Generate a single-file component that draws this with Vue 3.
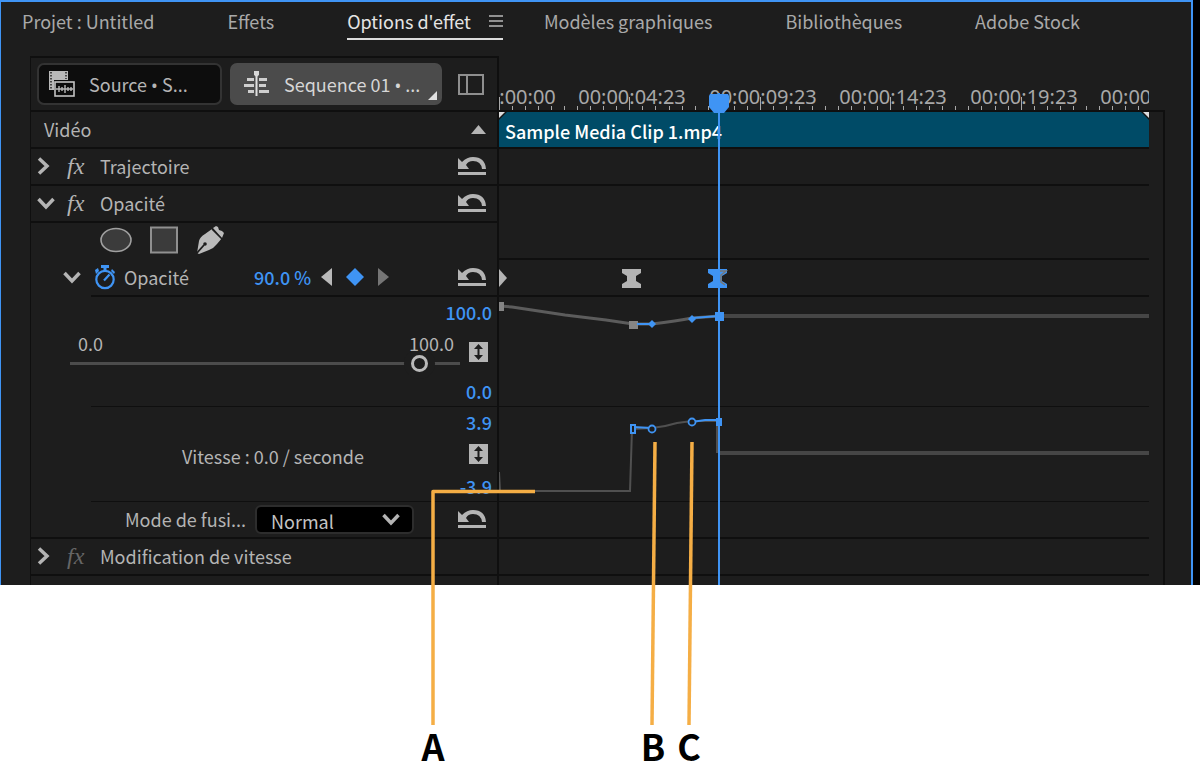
<template>
  <figure class="page">
    <div class="frame">
      <section class="panel">
        <nav class="tabs">
          <a v-for="tab in tabs" :key="tab" href="#" class="tab" :class="{ active: tab === activeTab }" @click.prevent="activeTab = tab">
            <span>{{ tab }}</span>
            <svg v-if="tab === activeTab" class="burger" width="14" height="12" viewBox="0 0 14 12">
              <path d="M0 1H14M0 6H14M0 11H14" stroke="#b8b8b8" stroke-width="1.4" />
            </svg>
          </a>
        </nav>

        <div class="body">
          <div class="props">
            <div class="head">
              <button class="source">
                <svg width="26" height="26" viewBox="0 0 26 26">
                  <path d="M0 0H19V9H5V19H0Z" fill="#b9b9b9" />
                  <path d="M2 1V18M17 1V8" stroke="#222" stroke-width="1.5" stroke-dasharray="1.5 1.5" />
                  <rect x="6" y="11" width="19" height="14" fill="#0d0d0d" stroke="#c4c4c4" stroke-width="1.6" />
                  <path d="M7 18H24M10 15V21M13 16V20M16 14V22M19 16V20M22 16V20" stroke="#b9b9b9" stroke-width="1.4" />
                </svg>
                <span>Source <span class="dot">•</span> S...</span>
              </button>
              <button class="sequence">
                <svg width="26" height="26" viewBox="0 0 26 26">
                  <path d="M3 8.500H10M15 8.500H23M0 14.500H10M15 14.500H22M4 20.500H10M15 20.500H25" stroke="#cfcfcf" stroke-width="3" />
                  <path d="M12.500 3V25" stroke="#e0e0e0" stroke-width="2" />
                  <path d="M10 0H15V4L12.500 6L10 4Z" fill="#d8d8d8" />
                </svg>
                <span>Sequence 01 <span class="dot">•</span> ...</span>
                <svg class="corner" width="9" height="9" viewBox="0 0 9 9"><path d="M9 0V9H0Z" fill="#e0e0e0" /></svg>
              </button>
              <button class="plain" aria-label="Timeline">
                <svg width="26" height="21" viewBox="0 0 26 21">
                  <path d="M1 1H25V20H1ZM9 1V20" fill="none" stroke="#8f8f8f" stroke-width="2" />
                </svg>
              </button>
            </div>

            <div class="row">
              <span class="section">Vidéo</span>
              <svg class="end" width="15" height="9" viewBox="0 0 15 9"><path d="M7.500 0L15 9H0Z" fill="#b4b4b4" /></svg>
            </div>

            <div class="row">
              <button class="plain toggle" aria-label="Trajectoire">
                <svg width="13" height="18" viewBox="0 0 13 18"><path d="M2 1.500L10 9L2 16.500" class="chev" /></svg>
              </button>
              <span class="fx">fx</span>
              <span>Trajectoire</span>
              <button class="plain end" aria-label="Reset"><svg width="28" height="20" viewBox="0 0 28 20"><path :d="resetPath" fill="#b4b4b4" /></svg></button>
            </div>

            <div class="row">
              <button class="plain toggle" aria-label="Opacité">
                <svg width="18" height="13" viewBox="0 0 18 13"><path d="M1.500 2L9 10L16.500 2" class="chev" /></svg>
              </button>
              <span class="fx">fx</span>
              <span>Opacité</span>
              <button class="plain end" aria-label="Reset"><svg width="28" height="20" viewBox="0 0 28 20"><path :d="resetPath" fill="#b4b4b4" /></svg></button>
            </div>

            <div class="row masks">
              <button class="plain" aria-label="Ellipse">
                <svg width="32" height="26" viewBox="0 0 32 26"><ellipse cx="16" cy="13" rx="15" ry="11.500" fill="#3b3b3b" stroke="#a0a0a0" stroke-width="1.6" /></svg>
              </button>
              <button class="plain" aria-label="Rectangle">
                <svg width="28" height="28" viewBox="0 0 28 28"><rect x="1" y="1.500" width="26" height="25" fill="#3b3b3b" stroke="#909090" stroke-width="2" /></svg>
              </button>
              <button class="plain" aria-label="Plume">
                <svg width="29" height="28" viewBox="0 0 29 28">
                  <path d="M1 27L3 15Q4 11 9 8L16 3L26 12L21 18Q18 22 13 24L3 28Z" fill="#bababa" />
                  <path d="M17 2L20 0L22 1L23 4L26 5L28 7L26 12Z" fill="#bababa" />
                  <path d="M0 28L8 19" stroke="#1d1d1d" stroke-width="1.8" />
                  <circle cx="9" cy="18" r="1.800" fill="#1d1d1d" />
                  <path d="M16 3L26 13" stroke="#1d1d1d" stroke-width="1.5" />
                </svg>
              </button>
            </div>

            <div class="row param">
              <button class="plain" aria-label="Opacité">
                <svg width="18" height="13" viewBox="0 0 18 13"><path d="M1.500 2L9 10L16.500 2" class="chev" /></svg>
              </button>
              <button class="plain watch" aria-label="Animation">
                <svg width="22" height="25" viewBox="0 0 22 25">
                  <circle cx="11" cy="14.500" r="8.700" fill="none" stroke="#3f94f4" stroke-width="2.200" />
                  <path d="M7 0H15V3H12.500V6H9.500V3H7ZM1 5L4 3L5 6L2 9ZM18 4L21 7L20 9L17 6Z" fill="#3f94f4" />
                  <path d="M15.500 9.500L10 15.500" stroke="#3f94f4" stroke-width="2.200" />
                </svg>
              </button>
              <span class="pname">Opacité</span>
              <span class="blue value">90.0 %</span>
              <div class="keys">
                <button class="plain" aria-label="Précédent"><svg width="11" height="18" viewBox="0 0 11 18"><path d="M11 0V18L0 9Z" fill="#b9b9b9" /></svg></button>
                <button class="plain" aria-label="Image clé"><svg width="18" height="18" viewBox="0 0 18 18"><path d="M9 0L18 9L9 18L0 9Z" fill="#3f94f4" /></svg></button>
                <button class="plain" aria-label="Suivant"><svg width="11" height="18" viewBox="0 0 11 18"><path d="M0 0V18L11 9Z" fill="#757575" /></svg></button>
              </div>
              <button class="plain end" aria-label="Reset"><svg width="28" height="20" viewBox="0 0 28 20"><path :d="resetPath" fill="#b4b4b4" /></svg></button>
            </div>

            <div class="row graph">
              <div class="slider">
                <label for="opacity"><span>0.0</span><span>100.0</span></label>
                <input id="opacity" v-model="opacity" type="range" min="0" max="100" step="0.5" />
              </div>
              <div class="scale">
                <span class="blue">100.0</span>
                <button class="plain fit" aria-label="Zoom"><svg width="19" height="20" viewBox="0 0 19 20"><path :d="fitBox" fill="#b4b4b4" /><path :d="fitArrow" fill="#1d1d1d" /></svg></button>
                <span class="blue">0.0</span>
              </div>
            </div>

            <div class="row velocity">
              <span class="speed">Vitesse : 0.0 / seconde</span>
              <div class="scale">
                <span class="blue">3.9</span>
                <button class="plain fit" aria-label="Zoom"><svg width="19" height="20" viewBox="0 0 19 20"><path :d="fitBox" fill="#b4b4b4" /><path :d="fitArrow" fill="#1d1d1d" /></svg></button>
                <span class="blue">-3.9</span>
              </div>
            </div>

            <div class="row mode">
              <label for="blend">Mode de fusi...</label>
              <div class="select">
                <select id="blend" v-model="blend">
                  <option>Normal</option>
                </select>
                <svg class="arrow" width="18" height="13" viewBox="0 0 18 13"><path d="M1.500 2L9 10L16.500 2" class="chev" /></svg>
              </div>
              <button class="plain end" aria-label="Reset"><svg width="28" height="20" viewBox="0 0 28 20"><path :d="resetPath" fill="#b4b4b4" /></svg></button>
            </div>

            <div class="row">
              <button class="plain toggle" aria-label="Modification de vitesse">
                <svg width="13" height="18" viewBox="0 0 13 18"><path d="M2 1.500L10 9L2 16.500" class="chev" /></svg>
              </button>
              <span class="fx dim">fx</span>
              <span>Modification de vitesse</span>
            </div>
          </div>

          <div class="timeline">
            <div class="ruler">
              <svg width="100%" height="54">
                <text v-for="(t, i) in times" :key="t" :x="labelX(i)" y="48" text-anchor="middle" class="time">{{ t }}</text>
                <path v-for="n in 50" :key="n" :d="tick(n - 1)" stroke="#a8a8a8" />
              </svg>
            </div>
            <div class="lanes">
              <div class="lane">
                <div class="clip">
                  <svg class="cut left" width="8" height="8" viewBox="0 0 8 8"><path d="M0 0H8L0 8Z" fill="#141414" /><path d="M0 0H6L0 6Z" fill="#dcdcdc" /></svg>
                  <span>Sample Media Clip 1.mp4</span>
                  <svg class="cut right" width="8" height="8" viewBox="0 0 8 8"><path d="M0 0H8V8Z" fill="#141414" /><path d="M2 0H8V6Z" fill="#dcdcdc" /></svg>
                </div>
              </div>
              <div class="lane"></div>
              <div class="lane open"></div>
              <div class="lane"></div>
              <div class="lane">
                <svg width="100%" height="35">
                  <path d="M0 9L8 18L0 27Z" fill="#b4b4b4" />
                  <path d="M123 9H142V13L137 16V21L142 24V28H123V24L128 21V16L123 13Z" fill="#b4b4b4" />
                  <path d="M209 9H228V13L223 16V21L228 24V28H209V24L214 21V16L209 13Z" fill="#3f94f4" />
                  <path d="M221 11H227L222 15V22L226 25" fill="none" stroke="#777" stroke-width="1.500" />
                </svg>
              </div>
              <div class="lane graph">
                <svg width="100%" height="109">
                  <path d="M0 9L13 10L66 18L107 23L134 27H153Q178 24 193 21L220 19" fill="none" stroke="#5c5c5c" stroke-width="3" />
                  <line x1="220" y1="19" x2="100%" y2="19" stroke="#464646" stroke-width="4" />
                  <path d="M0 5H5V14H0ZM130 24H139V32H130Z" fill="#858585" />
                  <path d="M138 27H153M193 21L220 19" stroke="#3f94f4" stroke-width="2" />
                  <path d="M153 23L157 27L153 31L149 27ZM193 18L197 22L193 26L189 22ZM216 15H225V24H216Z" fill="#3f94f4" />
                </svg>
              </div>
              <div class="lane velocity">
                <svg width="100%" height="94">
                  <path d="M0 65L1 84H131L133 22L153 21Q165 20 178 16L193 14H218V46" fill="none" stroke="#505050" stroke-width="2" />
                  <line x1="219" y1="46" x2="100%" y2="46" stroke="#464646" stroke-width="4" />
                  <path d="M134 20L153 21M193 15L206 13H220" fill="none" stroke="#3f94f4" stroke-width="2" />
                  <path d="M132 18H136V26H132Z" fill="#1d1d1d" stroke="#3f94f4" stroke-width="2" />
                  <circle cx="153" cy="22" r="3.500" fill="#1d1d1d" stroke="#3f94f4" stroke-width="1.800" />
                  <circle cx="193" cy="15" r="3.500" fill="#1d1d1d" stroke="#3f94f4" stroke-width="1.800" />
                  <path d="M217 11H223V19H217Z" fill="#3f94f4" />
                </svg>
              </div>
              <div class="lane"></div>
              <div class="lane"></div>
            </div>
            <div class="playhead">
              <svg width="20" height="19" viewBox="0 0 20 19"><path d="M1 0H19L20 2V13L15 19H5L0 13V2Z" fill="#3f94f4" /></svg>
            </div>
          </div>
        </div>
      </section>
    </div>

    <!-- callouts -->
    <svg class="callouts" width="100%" height="775">
      <g fill="none" stroke="#f5ae45" stroke-width="3.500" stroke-linejoin="round">
        <path d="M535 491.500H433V725" />
        <path d="M655 442L652 725" />
        <path d="M692 442L689 725" />
      </g>
      <g class="letters" text-anchor="middle">
        <text x="433" y="761">A</text>
        <text x="653" y="761">B</text>
        <text x="689" y="761">C</text>
      </g>
    </svg>
  </figure>
</template>

<script setup>
import { ref } from 'vue'

const tabs = ['Projet : Untitled', 'Effets', "Options d'effet", 'Modèles graphiques', 'Bibliothèques', 'Adobe Stock']
const activeTab = ref("Options d'effet")
const opacity = ref(91.5)
const blend = ref('Normal')

const times = ['00:00:00:00', '00:00:04:23', '00:00:09:23', '00:00:14:23', '00:00:19:23', '00:00:24:23']

// 10 ticks between two labels
const step = 13.04
function labelX(i) {
  return Math.round(i * step * 10) + 3
}
function tick(n) {
  const x = Math.round(n * step) + 0.5
  return `M${x} ${n % 10 === 0 ? 41 : 50}V54`
}

const resetPath = 'M0 2L4 6Q9 1 15 1Q27 1 28 13H24Q23 5 15 5Q10 5 8 9L11 13H0ZM0 16H28V19H0Z'
const fitBox = 'M0 0H19V20H0Z'
const fitArrow = 'M9.500 2L14 7H10.500V13H14L9.500 18L5 13H8.500V7H5Z'
</script>

<style>
body {
  margin: 0;
  background: #fff;
}
</style>

<style scoped>
.page {
  position: relative;
  margin: 0;
  min-height: 775px;
  overflow: hidden;
  font-family: "Noto Sans CJK SC", "Noto Sans", sans-serif;
  font-size: 18px;
  line-height: 24px;
  color: #b4b4b4;
}
.frame {
  background: #000;
  padding-right: 7px;
}
.panel {
  background: #1d1d1d;
  border: 2px solid #3f94f4;
  border-left-width: 1px;
  border-bottom: 0;
  padding: 0 26px 9px 29px;
}
.tabs {
  display: flex;
  gap: 41px;
  margin-left: -8px;
  height: 54px;
}
.tab {
  display: flex;
  align-items: center;
  box-sizing: border-box;
  height: 38px;
  padding-right: 32px;
  color: #a9a9a9;
  text-decoration: none;
  white-space: nowrap;
}
.tab.active {
  padding: 2px 0 0;
  color: #e4e4e4;
  border-bottom: 2px solid #dcdcdc;
}
.burger {
  margin-left: 18px;
}
.body {
  display: flex;
}
.props {
  box-sizing: border-box;
  flex: none;
  width: 469px;
  border-left: 1px solid #0f0f0f;
  border-right: 2px solid #0f0f0f;
  margin-bottom: -9px;
}
button {
  font: inherit;
  color: inherit;
  cursor: pointer;
}
.plain {
  display: flex;
  padding: 0;
  border: 0;
  background: none;
}
.head {
  display: flex;
  align-items: center;
  box-sizing: border-box;
  height: 56px;
  padding: 0 13px 0 6px;
  border-top: 2px solid #0f0f0f;
  border-bottom: 2px solid #0f0f0f;
}
.source,
.sequence {
  position: relative;
  display: flex;
  align-items: center;
  gap: 14px;
  box-sizing: border-box;
  height: 42px;
  padding: 0 10px;
  border: 2px solid #333;
  border-radius: 7px;
  background: #0d0d0d;
  white-space: nowrap;
}
.source svg,
.sequence svg {
  flex: none;
}
.source {
  width: 185px;
}
.sequence {
  width: 212px;
  margin-left: 8px;
  padding-left: 12px;
  border-color: #4b4b4b;
  background: #4b4b4b;
  color: #d6d6d6;
}
.dot {
  font-family: "Noto Sans", sans-serif;
}
.corner {
  position: absolute;
  right: 3px;
  bottom: 3px;
}
.head .plain {
  margin-left: auto;
}
.row {
  position: relative;
  display: flex;
  align-items: center;
  box-sizing: border-box;
  height: 37px;
  padding: 0 11px 1px 6px;
  border-bottom: 2px solid #0f0f0f;
  white-space: nowrap;
}
.section {
  margin-left: 7px;
}
.row .end {
  margin-left: auto;
}
.toggle {
  width: 30px;
  align-items: center;
}
.chev {
  fill: none;
  stroke: #b4b4b4;
  stroke-width: 3.5;
}
.fx {
  width: 33px;
  font: italic 24px/24px "Liberation Serif", serif;
}
.fx.dim {
  color: #666;
}
.masks {
  padding-left: 69px;
  gap: 18px;
  border-bottom-color: transparent;
}
.param {
  padding-left: 32px;
}
.watch {
  margin-left: 13px;
}
.pname {
  margin-left: 8px;
  width: 130px;
}
.blue {
  color: #3f94f4;
  font-weight: 500;
}
.value {
  width: 67px;
}
.keys {
  display: flex;
  gap: 14px;
}
.param,
.graph,
.velocity,
.mode {
  border-bottom-color: transparent;
}
.param::after,
.props .graph::after,
.props .velocity::after,
.mode::after {
  content: "";
  position: absolute;
  left: 60px;
  right: 0;
  top: 100%;
  height: 1px;
  background: #0f0f0f;
}
.param::after {
  height: 2px;
}
.mode::after {
  left: 0;
  height: 2px;
}
.graph {
  height: 110px;
  border-bottom-width: 1px;
}
.velocity {
  height: 95px;
  border-bottom-width: 1px;
}
.props .graph,
.props .velocity {
  align-items: stretch;
  padding-right: 5px;
}
.slider {
  flex: none;
  width: 390px;
  margin: 34px 0 0 33px;
}
.slider label {
  position: relative;
  z-index: 1;
  display: flex;
  justify-content: space-between;
  padding: 0 6px 0 8px;
}
.slider input {
  display: block;
  width: 100%;
  height: 17px;
  margin: 0;
  background: none;
  appearance: none;
}
.slider input::-webkit-slider-runnable-track {
  height: 17px;
  background: linear-gradient(#4c4c4c, #4c4c4c) center / 100% 3px no-repeat;
}
.slider input::-webkit-slider-thumb {
  appearance: none;
  box-sizing: border-box;
  width: 17px;
  height: 17px;
  border: 3px solid #b9b9b9;
  border-radius: 50%;
  background: #1d1d1d;
  box-shadow: 0 0 0 7px #1d1d1d;
}
.scale {
  display: flex;
  flex-direction: column;
  align-items: flex-end;
  justify-content: space-between;
  flex: none;
  width: 32px;
  padding: 3px 0 2px;
}
.fit {
  margin-right: 4px;
}
.velocity .scale {
  margin-left: auto;
}
.speed {
  align-self: center;
  margin-left: 145px;
  padding-top: 4px;
}
.mode label {
  margin-left: 88px;
  width: 130px;
}
.select {
  position: relative;
}
.select select {
  appearance: none;
  display: block;
  box-sizing: border-box;
  width: 159px;
  height: 29px;
  padding: 2px 14px 0;
  border: 2px solid #2d2d2d;
  border-radius: 6px;
  background: #000;
  color: #c4c4c4;
  font: inherit;
  line-height: 24px;
}
.arrow {
  position: absolute;
  right: 14px;
  top: 8px;
  pointer-events: none;
}
.timeline {
  position: relative;
  flex: 1;
  min-width: 0;
  margin-bottom: -9px;
}
.ruler {
  height: 54px;
  padding-right: 16px;
  border-bottom: 2px solid #0f0f0f;
}
.ruler svg,
.lane svg {
  display: block;
}
.time {
  font-family: "Noto Sans", sans-serif;
  font-size: 20px;
  fill: #a8a8a8;
}
.lanes {
  padding: 0 14px 9px 0;
  border-right: 2px solid #0f0f0f;
}
.lane {
  box-sizing: border-box;
  height: 37px;
  border-bottom: 2px solid #0f0f0f;
}
.lane.open {
  border-color: transparent;
}
.lane.graph {
  height: 110px;
  border-bottom: 1px solid #0f0f0f;
}
.lane.velocity {
  height: 95px;
  border-bottom: 1px solid #0f0f0f;
}
.clip {
  position: relative;
  height: 35px;
  padding-left: 6px;
  line-height: 38px;
  background: #004b67;
  color: #fff;
  font-weight: 500;
  white-space: nowrap;
  overflow: hidden;
}
.cut {
  position: absolute;
  top: 0;
}
.cut.left {
  left: 0;
}
.cut.right {
  right: 0;
}
.playhead {
  position: absolute;
  left: 210px;
  top: 37px;
  bottom: 0;
  width: 20px;
  background: linear-gradient(#3f94f4, #3f94f4) center / 2px 100% no-repeat;
}
.callouts {
  position: absolute;
  left: 0;
  top: 0;
  pointer-events: none;
}
.letters {
  font-size: 36px;
  font-weight: 700;
  fill: #000;
}
</style>
